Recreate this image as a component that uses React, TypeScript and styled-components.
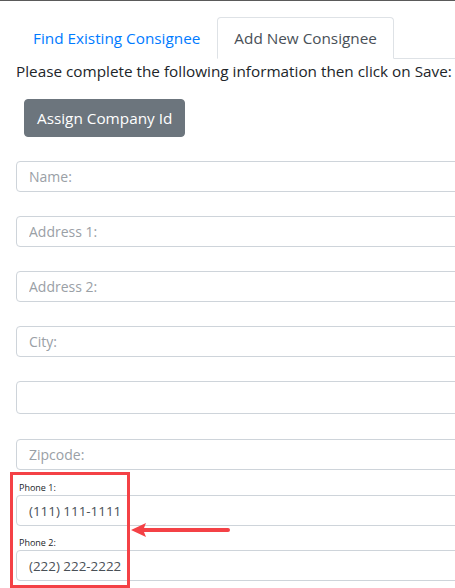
import React from "react";
import styled, { createGlobalStyle } from "styled-components";

const Global = createGlobalStyle`
  html, body { margin: 0; padding: 0; background: #fff; overflow: hidden; }
  body { font-family: "Open Sans", "Noto Sans", sans-serif; color: #212529; }
  * { box-sizing: border-box; }
`;

const Page = styled.div`
  position: relative;
  width: 455px;
  height: 588px;
  overflow: hidden;
  border-top: 1px solid #5a5a5a;
  padding-left: 16px;
`;

const Nav = styled.div`
  display: flex;
  margin-top: 16px;
  border-bottom: 1px solid #dee2e6;
  width: 520px;
`;

const Tab = styled.div<{ $active?: boolean }>`
  padding: 8px 16px;
  font-size: 15.3px;
  line-height: 24px;
  margin-bottom: -1px;
  border: 1px solid ${(p) => (p.$active ? "#dee2e6" : "transparent")};
  border-bottom-color: ${(p) => (p.$active ? "#fff" : "transparent")};
  border-radius: 4px 4px 0 0;
  background: #fff;
  color: ${(p) => (p.$active ? "#495057" : "#007bff")};
`;

const Intro = styled.p`
  margin: 0;
  font-size: 15.3px;
  line-height: 24px;
  white-space: nowrap;
`;

const Button = styled.button`
  display: block;
  margin: 16px 0 0 8px;
  padding: 6px 12px;
  font-family: inherit;
  font-size: 15.3px;
  line-height: 24px;
  color: #fff;
  background: #6c757d;
  border: 1px solid #6c757d;
  border-radius: 4px;
`;

const Fields = styled.div`
  display: flex;
  flex-direction: column;
  margin-top: 24px;
  width: 520px;
`;

const Field = styled.div<{ $gap: number }>`
  margin-bottom: ${(p) => p.$gap}px;
  display: flex;
  flex-direction: column;
`;

const Label = styled.label`
  font-size: 9px;
  line-height: 12px;
  color: #212529;
  padding-left: 3px;
  margin-bottom: 1px;
`;

const Input = styled.input<{ $h?: number; $small?: boolean }>`
  width: 100%;
  height: ${(p) => p.$h ?? 31}px;
  padding: 0 12px;
  font-family: inherit;
  font-size: ${(p) => (p.$small ? 13.4 : 14)}px;
  color: #495057;
  border: 1px solid #ced4da;
  border-radius: 4px;
  background: #fff;
  outline: none;
  &::placeholder { color: #9aa0a6; }
`;

const Highlight = styled.div`
  position: absolute;
  left: 10px;
  top: 471px;
  width: 120px;
  height: 116px;
  border: 3px solid #f44146;
  pointer-events: none;
`;

const Arrow = styled.svg`
  position: absolute;
  left: 130px;
  top: 520px;
  pointer-events: none;
`;

export default function App() {
  return (
    <>
      <Global />
      <Page>
        <Nav>
          <Tab>Find Existing Consignee</Tab>
          <Tab $active>Add New Consignee</Tab>
        </Nav>
        <Intro>Please complete the following information then click on Save:</Intro>
        <Button>Assign Company Id</Button>
        <Fields>
          <Field $gap={24}><Input placeholder="Name:" /></Field>
          <Field $gap={24}><Input placeholder="Address 1:" /></Field>
          <Field $gap={24}><Input placeholder="Address 2:" /></Field>
          <Field $gap={24}><Input placeholder="City:" /></Field>
          <Field $gap={25}><Input $h={33} /></Field>
          <Field $gap={12}><Input placeholder="Zipcode:" /></Field>
          <Field $gap={11}>
            <Label>Phone 1:</Label>
            <Input $small defaultValue="(111) 111-1111" />
          </Field>
          <Field $gap={0}>
            <Label>Phone 2:</Label>
            <Input $small defaultValue="(222) 222-2222" />
          </Field>
        </Fields>
        <Highlight />
        <Arrow width="102" height="18" viewBox="0 0 102 18">
          <path d="M1 9 L16 2 L14 7 L98 7 L98 11 L14 11 L16 16 Z" fill="#f44146" />
          <line x1="14" y1="9" x2="98" y2="9" stroke="#f44146" strokeWidth="4" strokeLinecap="round" />
        </Arrow>
      </Page>
    </>
  );
}
